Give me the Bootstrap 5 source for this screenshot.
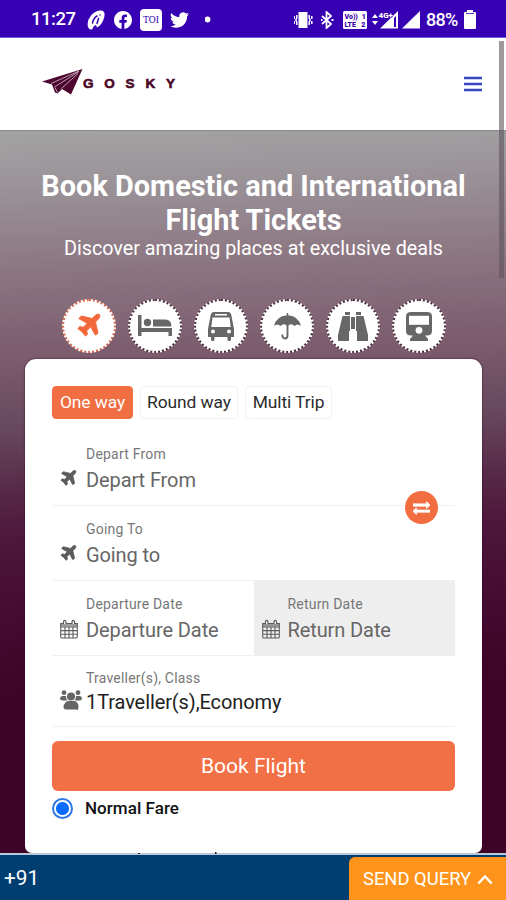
<!DOCTYPE html>
<html lang="en">
<head>
<meta charset="utf-8">
<meta name="viewport" content="width=device-width, initial-scale=1">
<title>GOSKY</title>
<link href="https://cdn.jsdelivr.net/npm/bootstrap@5.3.0/dist/css/bootstrap.min.css" rel="stylesheet">
<style>
body{font-family:Roboto,"Liberation Sans",sans-serif;width:506px;height:900px;overflow:hidden;background:#fff;color:#222}
svg{display:block;flex:none}
.status{height:38px;background:#3700b3;border-bottom:1px solid #6a5ae0;padding:2px 30px 0 31px;color:#fff;font-size:18.5px;font-weight:500}
.clock{width:56px;letter-spacing:-.5px}
.pct{width:38px;margin-left:6px;font-size:18px;letter-spacing:-.7px}
.fb{margin-left:9px}
.sig1{margin-left:5px}
.sig2{margin-left:3px}
.site-head{height:93px;border-bottom:1px solid #8c898b;padding:0 24px 0 42px}
.brand-word{font:700 13.5px "Liberation Sans",Arial,sans-serif;letter-spacing:10.8px;padding-top:2px;color:#4b0826;-webkit-text-stroke:.6px #4b0826}
.thumb{position:absolute;right:2px;top:41px;width:5px;height:237px;background:rgba(95,85,93,.6)}
.hero{height:722px;padding:38px 24px 0 25px;background:linear-gradient(178deg,#a3a2a3 0,#9b959a 50px,#8d7783 135px,#7c5c6d 225px,#67475c 300px,#552745 365px,#4e163c 410px,#470d33 470px,#410429 550px,#3f0328 620px)}
.hero h1{font-size:28.9px;line-height:34px;margin:0 -10px -3px}
.sub{font-size:19.75px;line-height:30px}
.kinds{gap:12px;margin:35px 0 6px;padding-left:37px}
.kind{width:54px;height:54px;border:2px dotted #4b303f;background:#fff;color:#676767}
.kind.on{border-color:#d8684d;color:#f1693a}
.panel{height:494px;background:#fff;border-radius:11px 11px 7px 7px;padding:27px 27px 0;box-shadow:0 0 2px #30051f}
.trip{height:33px;border:1px solid #f2f2f2;border-radius:4px;background:#fff;font-size:17.4px;line-height:31px;color:#2b2b2b;padding:0;letter-spacing:-.08px}
.trip.on{background:#f16e42;border-color:#f16e42;color:#fff}
.t-one{width:81px}
.t-round{width:98px;margin-left:7px}
.t-multi{width:87px;margin-left:7px}
.field{height:75px;border-bottom:1px solid #f0f0f0;padding:13px 0 0 34px}
.field small{display:block;font-size:14px;letter-spacing:.2px;line-height:20px;color:#777}
.field span{display:block;font-size:20px;letter-spacing:-.1px;line-height:32px;color:#666;white-space:nowrap}
.field .ico{position:absolute;left:7px;top:38px;color:#5b5b5b}
.field .jet{stroke:#5b5b5b;stroke-width:70px}
.ret{background:#eee}
.swap{position:absolute;right:17px;top:60px;width:33px;height:33px;background:#f26d40;color:#fff;z-index:2}
.travellers{height:71px;padding-top:12px}
.travellers span{color:#222;line-height:29px}
.travellers .ico{left:8px;top:34px;color:#666}
.book{height:50px;margin-top:14px;border-radius:6px;background:#f27045;color:#fff;font-size:21px;line-height:51px;padding:0;border:0}
.radio{width:21px;height:21px;border:2px solid #2e78e6;border-radius:50%;background:radial-gradient(circle,#0a6cff 0 6px,#fff 7px)}
.fare{height:35px;gap:12px;font-size:17px;letter-spacing:.05px;font-weight:500;color:#111}
.peek{margin:25px 0 0 86px}
.foot{height:47px;background:#003e71;border-top:2px solid #b9c8db;color:#fff;font-size:20.8px}
.dial{line-height:47px}
.query{width:157px;height:43px;margin-top:2px;background:#ff941c;border-radius:6px 0 0 0;font-size:18.4px;padding:1px 0 0 14px;gap:6px}
</style>
<script src="https://cdn.jsdelivr.net/npm/bootstrap@5.3.0/dist/js/bootstrap.bundle.min.js"></script>
</head>
<body>
<svg width="0" height="0" class="position-absolute"><defs>
<symbol id="plane" viewBox="0 0 1792 1792"><path fill="currentColor" d="M1568 160q44 52 12 148t-108 172l-161 161 160 696q5 19-12 33l-128 96q-7 6-19 6-4 0-7-1-15-3-21-16l-279-508-259 259 53 194q5 17-8 31l-96 96q-9 9-23 9h-2q-15-2-24-13l-189-252-252-189q-11-7-13-23-1-13 9-25l96-97q9-9 23-9 6 0 8 1l194 53 259-259-508-279q-14-8-17-24-2-16 9-27l128-128q14-13 30-8l665 159 160-160q76-76 172-108t148 12z"/></symbol>
<symbol id="cal" viewBox="0 0 20 20"><path d="M1.700 4.500h16.600v13.200q0 1.300-1.300 1.300H3q-1.300 0-1.300-1.300zM2 8h16M2 11.600h16M2 15.200h16M6 8v11M10 8v11M14 8v11" fill="none" stroke="currentColor" stroke-width="1.100"/><path d="M1.700 4h16.600v3.500H1.700z" fill="currentColor" opacity=".6"/><path d="M4.500 5V3q0-1.600 1.200-1.600T7 3v2M13 5V3q0-1.600 1.200-1.600T15.500 3v2" fill="#fff" stroke="currentColor" stroke-width="1.200"/></symbol>
</defs></svg>

<div class="status d-flex align-items-center">
  <div class="clock">11:27</div>
  <svg width="18" height="20" viewBox="0 0 18 20"><path fill="#fff" d="M1 17Q-.5 11 4 5.500 9 0 14.500 .5 19 1.500 17 8q-2 7-7 9.500L9 15l-2 1-2 3.500q-3 .5-4-2.500z"/><path d="M5.500 13q1-5 4.500-7M10 13.500l1.500-5M13 5v.1" fill="none" stroke="#3700b3" stroke-width="1.500" stroke-linecap="round"/></svg>
  <svg class="fb" width="18" height="18" viewBox="0 0 16 16"><path fill="#fff" d="M16 8.049c0-4.446-3.582-8.050-8-8.050C3.580 0-.002 3.603-.002 8.050c0 4.017 2.926 7.347 6.750 7.951v-5.625h-2.030V8.050H6.750V6.275c0-2.017 1.195-3.131 3.022-3.131.876 0 1.791.157 1.791.157v1.980h-1.009c-.993 0-1.303.621-1.303 1.258v1.510h2.218l-.354 2.326H9.250V16c3.824-.604 6.750-3.934 6.750-7.951z"/></svg>
  <svg class="ms-2" width="22" height="22" viewBox="0 0 22 22"><rect width="22" height="22" rx="4" fill="#fff"/><text x="11" y="14.300" text-anchor="middle" font-family="Liberation Serif,serif" font-size="9.500" textLength="16" lengthAdjust="spacingAndGlyphs" fill="#3700b3">TOI</text></svg>
  <svg class="ms-2" width="19" height="19" viewBox="0 0 16 16"><path fill="#fff" d="M5.026 15c6.038 0 9.341-5.003 9.341-9.334 0-.14 0-.282-.006-.422A6.685 6.685 0 0 0 16 3.542a6.658 6.658 0 0 1-1.889.518 3.301 3.301 0 0 0 1.447-1.817 6.533 6.533 0 0 1-2.087.793A3.286 3.286 0 0 0 7.875 6.030a9.325 9.325 0 0 1-6.767-3.429 3.289 3.289 0 0 0 1.018 4.382A3.323 3.323 0 0 1 .64 6.575v.045a3.288 3.288 0 0 0 2.632 3.218 3.203 3.203 0 0 1-.865.115 3.230 3.230 0 0 1-.614-.057 3.283 3.283 0 0 0 3.067 2.277A6.588 6.588 0 0 1 .78 13.580a6.320 6.320 0 0 1-.78-.045A9.344 9.344 0 0 0 5.026 15z"/></svg>
  <svg class="ms-3 me-auto" width="7" height="7"><circle cx="2.500" cy="3.500" r="2.900" fill="#fff"/></svg>
  <svg width="19" height="18" viewBox="0 0 19 18"><path fill="#fff" d="M4.500 1h9v16h-9z"/><path d="M2.800 4v3l-1 2 1 2v3M.2 5v3M.2 10v3M15.200 4v3l1 2-1 2v3M17.800 5v3M17.800 10v3" fill="none" stroke="#fff" stroke-width="1.500"/></svg>
  <svg class="ms-2" width="14" height="18" viewBox="0 0 14 18"><path d="M1 5l9 8-4.500 4V1L10 5l-9 8M0 9h1.500M10.500 9H12.500" fill="none" stroke="#fff" stroke-width="1.800"/></svg>
  <svg class="ms-2" width="24" height="18" viewBox="0 0 24 18"><rect width="24" height="18" rx="1.500" fill="#fff"/><g font-family="Roboto,sans-serif" font-weight="900" font-size="7" fill="#3700b3"><text x="1.500" y="7.500">Vo))</text><text x="1.500" y="16.300">LTE</text><text x="18.800" y="7.500">1</text><text x="18.300" y="16.300">2</text></g></svg>
  <svg class="sig1" width="27" height="19" viewBox="0 0 27 19"><path fill="#fff" d="M0 8l3-4 3 4zM0 11l3 4 3-4zM8 18.500L26 1v17.500z"/><path fill="#3700b3" d="M22 8l2-2v11h-2z"/><text x="6.500" y="7.500" font-family="Roboto,sans-serif" font-size="8" font-weight="900" fill="#fff" stroke="#3700b3" stroke-width=".7" paint-order="stroke">4G+</text></svg>
  <svg class="sig2" width="18" height="18" viewBox="0 0 18 18"><path fill="#fff" d="M0 17.500L18 0v17.500z"/></svg>
  <div class="pct">88%</div>
  <svg width="12" height="19" viewBox="0 0 12 19"><path fill="#fff" d="M3 0h6v2h2q1 0 1 1v15q0 1-1 1H1q-1 0-1-1V3q0-1 1-1h2z"/><path d="M2 3.500h8" stroke="#3700b3" stroke-width=".8"/></svg>
</div>

<header class="site-head d-flex align-items-center justify-content-between">
  <div class="d-flex align-items-center pb-1">
    <svg width="41" height="26" viewBox="0 0 41 26"><path fill="#4e0830" d="M0 12.500L40.500 0 29 25.500l-9-5.500-4.500 4.500-2.500-1-3-8z"/><path d="M9 14.500L37 2M12.500 18L37 2.500M19.500 19.500L36 4.500M13 18.500l2.500 5" fill="none" stroke="#fff" stroke-width=".6"/></svg>
    <span class="brand-word">GOSKY</span>
  </div>
  <svg width="18" height="16" viewBox="0 0 18 16"><path d="M0 2h18M0 8h18M0 14h18" stroke="#3846bf" stroke-width="2.600"/></svg>
</header>
<div class="thumb"></div>

<main class="hero">
  <h1 class="text-white text-center fw-bold">Book Domestic and International<br>Flight Tickets</h1>
  <div class="sub text-white text-center">Discover amazing places at exclusive deals</div>
  <div class="kinds d-flex">
    <div class="kind on rounded-circle d-flex align-items-center justify-content-center"><svg width="28" height="28"><use href="#plane" stroke="#f1693a" stroke-width="60"/></svg></div>
    <div class="kind rounded-circle d-flex align-items-center justify-content-center"><svg width="34" height="22" viewBox="0 0 34 22" fill="currentColor"><path d="M0 0h3.500v13H34v8h-3.500v-4h-27v4H0z"/><circle cx="9.500" cy="7.500" r="3.700"/><path d="M15 4.500h12q6.500 0 6.500 7H15z"/></svg></div>
    <div class="kind rounded-circle d-flex align-items-center justify-content-center"><svg width="26" height="29" viewBox="0 0 26 29"><path fill="currentColor" d="M6 0h14q3 0 3.500 4L26 17v8h-3v2.500q0 1.500-1.800 1.500t-1.700-1.500V25h-13v2.500Q6.500 29 4.800 29T3 27.500V25H0v-8L2.500 4Q3 0 6 0z"/><path fill="#fff" d="M7 2h12v1.500H7zM4.500 5.500h17L22.700 15H3.300z"/><circle cx="5" cy="19.500" r="2" fill="#fff"/><circle cx="21" cy="19.500" r="2" fill="#fff"/></svg></div>
    <div class="kind rounded-circle d-flex align-items-center justify-content-center"><svg width="27" height="27" viewBox="0 0 27 27"><path fill="currentColor" d="M12.800 0h1.400v2.200Q24.500 3 27 13q-3.500-3-6.500 0-3.300-3.500-7 0-3.700-3.500-7 0-3-3-6.500 0Q2.500 3 12.800 2.200z"/><path d="M13.500 12v10.500q0 3-2.500 3t-2.700-3.200" fill="none" stroke="currentColor" stroke-width="1.900" stroke-linecap="round"/></svg></div>
    <div class="kind rounded-circle d-flex align-items-center justify-content-center"><svg width="30" height="29" viewBox="0 0 30 29" fill="currentColor"><path d="M7 0h5v3H7zM18 0h5v3h-5zM4.500 4H12v15h-1v10H0v-6zM18 4h7.500L30 23v6H19V19h-1zM13 5h4v12h-4z"/></svg></div>
    <div class="kind rounded-circle d-flex align-items-center justify-content-center"><svg width="26" height="29" viewBox="0 0 26 29"><path fill="currentColor" d="M5 0h16q5 0 5 4.500V19q0 4.500-5 4.500h-2l3 3.500V29H4v-2l3-3.500H5q-5 0-5-4.500V4.500Q0 0 5 0z"/><path fill="#fff" d="M3 3.800h20v9H3z"/><circle cx="13" cy="18.300" r="3.400" fill="#fff"/></svg></div>
  </div>

  <section class="panel">
    <div class="d-flex mb-2 pb-1">
      <button class="btn trip on t-one">One way</button>
      <button class="btn trip t-round">Round way</button>
      <button class="btn trip t-multi">Multi Trip</button>
    </div>
    <div class="field position-relative"><small>Depart From</small><span>Depart From</span><svg class="ico jet" width="19" height="19"><use href="#plane"/></svg>
      <div class="swap rounded-circle d-flex align-items-center justify-content-center"><svg width="17" height="17" viewBox="0 0 1792 1792"><path fill="currentColor" stroke="currentColor" stroke-width="70" d="M1792 1184v192q0 13-9.500 22.500t-22.500 9.500h-1376v192q0 13-9.500 22.500t-22.500 9.500q-12 0-24-10l-319-320q-9-9-9-22 0-14 9-23l320-320q9-9 23-9 13 0 22.500 9.500t9.500 22.500v192h1376q13 0 22.500 9.500t9.500 22.500zm0-544q0 14-9 23l-320 320q-9 9-23 9-13 0-22.500-9.500t-9.500-22.500v-192h-1376q-13 0-22.500-9.500t-9.500-22.500v-192q0-13 9.500-22.500t22.500-9.500h1376v-192q0-14 9-23t23-9q12 0 24 10l319 319q9 9 9 23z"/></svg></div>
    </div>
    <div class="field position-relative"><small>Going To</small><span>Going to</span><svg class="ico jet" width="19" height="19"><use href="#plane"/></svg></div>
    <div class="row g-0">
      <div class="col-6 field position-relative"><small>Departure Date</small><span>Departure Date</span><svg class="ico" width="20" height="20"><use href="#cal"/></svg></div>
      <div class="col-6 field ret position-relative"><small>Return Date</small><span>Return Date</span><svg class="ico" width="20" height="20"><use href="#cal"/></svg></div>
    </div>
    <div class="field position-relative travellers"><small>Traveller(s), Class</small><span>1Traveller(s),Economy</span>
      <svg class="ico" width="22" height="20" viewBox="0 0 22 20" fill="currentColor"><circle cx="4" cy="2.700" r="2.400"/><circle cx="18" cy="2.700" r="2.400"/><circle cx="11" cy="6.500" r="4"/><path d="M2 6h4q0 3 1.500 4.500H2.500Q0 10.500 0 8.500T2 6zM20 6h-4q0 3-1.500 4.500h5q2.500 0 2.500-2T20 6zM7.500 11h7q4 1 4 5.500T16 19.500H6q-2.500 0-2.500-3t4-5.500z"/></svg></div>
    <button class="btn book w-100 d-block">Book Flight</button>
    <label class="fare d-flex align-items-center"><i class="radio"></i>Normal Fare</label>
    <svg class="peek" width="120" height="3"><path d="M0 2h2v1H0zM77 1h1.500v2H77z" fill="#222"/></svg>
  </section>
</main>

<footer class="foot d-flex justify-content-between">
  <div class="ps-1 dial">+91</div>
  <div class="query d-flex align-items-center">SEND QUERY<svg width="16" height="11" viewBox="0 0 16 11"><path d="M1.300 9.500L8 2.500l6.700 7" fill="none" stroke="#fff" stroke-width="2.400"/></svg></div>
</footer>
</body>
</html>
